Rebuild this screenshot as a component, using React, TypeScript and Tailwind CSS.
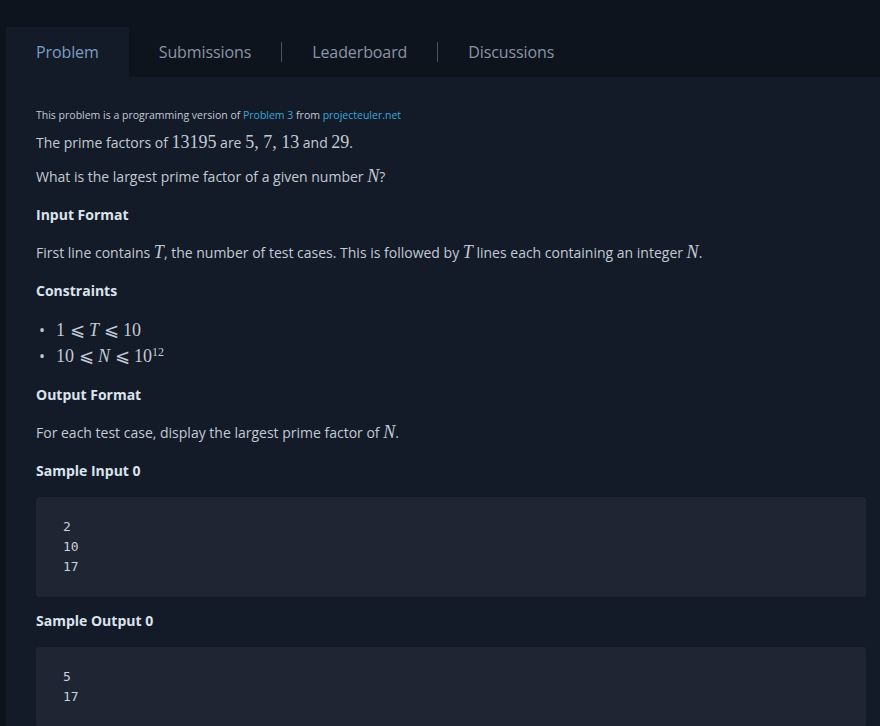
import React from 'react';

const math = "font-['Liberation_Serif','DejaVu_Serif',serif]";

function M({ children, italic }: { children: React.ReactNode; italic?: boolean }) {
  return <span className={`${math} text-[18px] leading-none ${italic ? 'italic' : ''}`}>{children}</span>;
}

function Tab({ label, active }: { label: string; active?: boolean }) {
  return (
    <div
      className={
        active
          ? 'h-full flex items-center px-[30px] bg-[#131a28] text-[#7d9cc2]'
          : 'h-full flex items-center px-[30px] text-[#8a94a4]'
      }
    >
      {label}
    </div>
  );
}

function Sep() {
  return <span className="w-px h-[20px] bg-[#4a5260]" />;
}

function Heading({ children }: { children: React.ReactNode }) {
  return <h3 className="font-bold text-[14px] text-[#dce3ec] leading-[20px]">{children}</h3>;
}

function Code({ lines }: { lines: string[] }) {
  return (
    <pre className="bg-[#1f2532] rounded-[3px] px-[27px] py-[20px] font-['DejaVu_Sans_Mono',monospace] text-[13px] leading-[20px] text-[#c9d2de]">
      {lines.join('\n')}
    </pre>
  );
}

export default function App() {
  return (
    <div className="min-h-screen bg-[#0e141e] pt-[27px] pl-[6px] font-['Open_Sans',sans-serif] overflow-hidden">
      <div className="flex items-center h-[50px] text-[16px] tracking-[-0.1px]">
        <Tab label="Problem" active />
        <Tab label="Submissions" />
        <Sep />
        <Tab label="Leaderboard" />
        <Sep />
        <Tab label="Discussions" />
      </div>

      <div className="bg-[#131a28] pl-[30px] pr-[14px] pt-[28px] pb-10 text-[14px] text-[#c3cad4]">
        <p className="text-[10.5px] leading-[20px] text-[#c3cad4]">
          This problem is a programming version of <span className="text-[#3aa8d8]">Problem 3</span> from{' '}
          <span className="text-[#3aa8d8]">projecteuler.net</span>
        </p>
        <p className="mt-[8px] leading-[20px]">
          The prime factors of <M>13195</M> are <M>5,&nbsp;7,&nbsp;13</M> and <M>29</M>.
        </p>
        <p className="mt-[14px] leading-[20px]">
          What is the largest prime factor of a given number <M italic>N</M>?
        </p>

        <div className="mt-[18px]">
          <Heading>Input Format</Heading>
        </div>
        <p className="mt-[18px] leading-[20px]">
          First line contains <M italic>T</M>, the number of test cases. This is followed by <M italic>T</M> lines
          each containing an integer <M italic>N</M>.
        </p>

        <div className="mt-[18px]">
          <Heading>Constraints</Heading>
        </div>
        <ul className="mt-[16px]">
          <li className="flex items-center h-[26px]">
            <span className="w-[20px] pl-[3px] text-[16px]">•</span>
            <M>
              1 ⩽ <i>T</i> ⩽ 10
            </M>
          </li>
          <li className="flex items-center h-[26px]">
            <span className="w-[20px] pl-[3px] text-[16px]">•</span>
            <M>
              10 ⩽ <i>N</i> ⩽ 10<sup className="text-[12px]">12</sup>
            </M>
          </li>
        </ul>

        <div className="mt-[16px]">
          <Heading>Output Format</Heading>
        </div>
        <p className="mt-[18px] leading-[20px]">
          For each test case, display the largest prime factor of <M italic>N</M>.
        </p>

        <div className="mt-[18px]">
          <Heading>Sample Input 0</Heading>
        </div>
        <div className="mt-[16px]">
          <Code lines={['2', '10', '17']} />
        </div>

        <div className="mt-[14px]">
          <Heading>Sample Output 0</Heading>
        </div>
        <div className="mt-[16px]">
          <Code lines={['5', '17']} />
        </div>
      </div>
    </div>
  );
}
